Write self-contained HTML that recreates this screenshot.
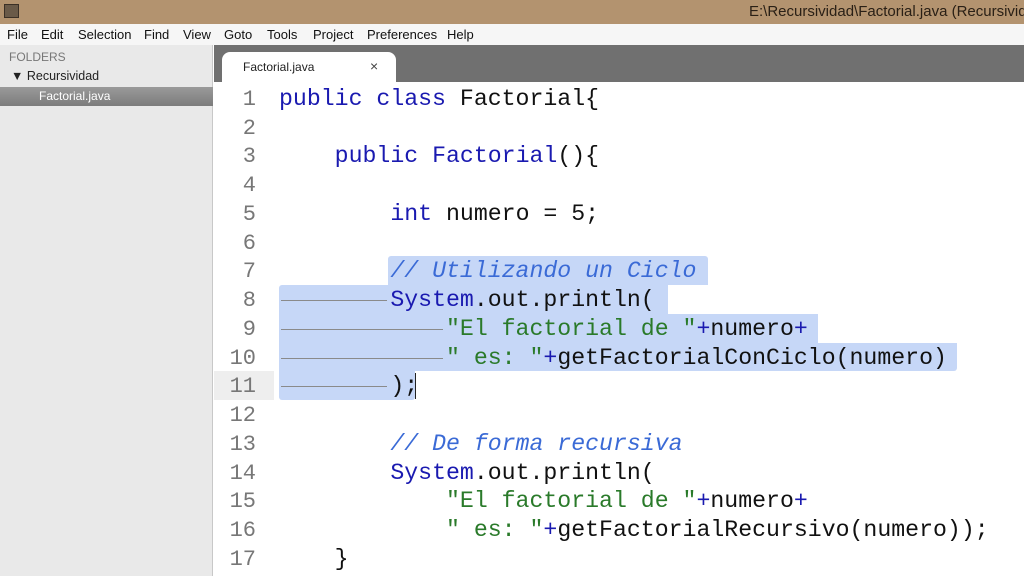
<!DOCTYPE html>
<html><head><meta charset="utf-8"><style>
*{margin:0;padding:0;box-sizing:border-box}
body{width:1024px;height:576px;overflow:hidden;position:relative;background:#fff;font-family:"Liberation Sans","DejaVu Sans",sans-serif}
#title{position:absolute;left:0;top:0;width:1024px;height:24px;background:#b3936f}
#title .ic{position:absolute;left:4px;top:4px;width:15px;height:14px;background:#6a5a48;border:1px solid #3b3026}
#title .t{position:absolute;left:749px;top:3px;font-size:15px;color:#2a2016;white-space:nowrap}
#menu{position:absolute;left:0;top:24px;width:1024px;height:21px;background:#f6f6f6;font-size:13px;color:#111}
#menu span{position:absolute;top:3px}
#side{position:absolute;left:0;top:45px;width:213px;height:531px;background:#e9e9e9;border-right:1px solid #c8c8c8}
#side .f{position:absolute;left:9px;top:5px;font-size:12px;color:#777}
#side .r{position:absolute;left:11px;top:24px;font-size:12.5px;color:#222}
#side .sel{position:absolute;left:0;top:42px;width:213px;height:19px;background:linear-gradient(#9a9a9a,#7c7c7c)}
#side .sel span{position:absolute;left:39px;top:2px;font-size:12px;color:#fff}
#tabs{position:absolute;left:214px;top:45px;width:810px;height:37px;background:#707070}
#tab{position:absolute;left:222px;top:52px;width:174px;height:31px;background:#fff;border-radius:8px 8px 0 0}
#tab .n{position:absolute;left:21px;top:8px;font-size:12px;color:#222}
#tab .x{position:absolute;left:148px;top:6px;font-size:14px;color:#444}
#ed{position:absolute;left:214px;top:82px;width:810px;height:494px;background:#fff}
.ln{position:absolute;left:214px;width:42px;text-align:right;font-family:"Liberation Mono","DejaVu Sans Mono",monospace;font-size:22px;color:#777;height:29px;line-height:29px}
.cl{position:absolute;left:279px;font-family:"Liberation Mono","DejaVu Sans Mono",monospace;font-size:23.2px;color:#111;white-space:pre;height:29px;line-height:29px}
.k{color:#1a1ab0}.s{color:#2a7a2a}.c{color:#3a6ad6;font-style:italic}.p{color:#1a1ab0}
.sl{position:absolute;background:#c6d7f7}
.g{position:absolute;height:1px;background:#8a8a8a}
#cur{position:absolute;left:214px;top:371px;width:60px;height:29px;background:#eeeeee}
</style></head><body>
<div id="title"><div class="ic"></div><div class="t">E:\Recursividad\Factorial.java (Recursividad</div></div>
<div id="menu"><span style="left:7px">File</span><span style="left:41px">Edit</span><span style="left:78px">Selection</span><span style="left:144px">Find</span><span style="left:183px">View</span><span style="left:224px">Goto</span><span style="left:267px">Tools</span><span style="left:313px">Project</span><span style="left:367px">Preferences</span><span style="left:447px">Help</span></div>
<div id="side"><div class="f">FOLDERS</div><div class="r">▼ Recursividad</div><div class="sel"><span>Factorial.java</span></div></div>
<div id="tabs"></div>
<div id="tab"><span class="n">Factorial.java</span><span class="x">×</span></div>
<div id="ed"></div>
<div id="cur"></div>
<div class="sl" style="left:388px;top:256px;width:320px;height:29px;border-radius:3px 3px 0 0"></div>
<div class="sl" style="left:279px;top:285px;width:389px;height:29px;border-radius:3px 0 0 0"></div>
<div class="sl" style="left:279px;top:314px;width:539px;height:29px"></div>
<div class="sl" style="left:279px;top:343px;width:678px;height:28px;border-radius:0 0 3px 0"></div>
<div class="sl" style="left:279px;top:371px;width:136px;height:29px;border-radius:0 0 3px 3px"></div>
<div class="g" style="left:281px;top:300px;width:106px"></div>
<div class="g" style="left:281px;top:329px;width:162px"></div>
<div class="g" style="left:281px;top:358px;width:162px"></div>
<div class="g" style="left:281px;top:386px;width:106px"></div>
<div style="position:absolute;left:415px;top:373px;width:1px;height:26px;background:#222"></div>

<div class="ln" style="top:85px">1</div><div class="ln" style="top:114px">2</div><div class="ln" style="top:142px">3</div><div class="ln" style="top:171px">4</div><div class="ln" style="top:200px">5</div><div class="ln" style="top:229px">6</div><div class="ln" style="top:257px">7</div><div class="ln" style="top:286px">8</div><div class="ln" style="top:315px">9</div><div class="ln" style="top:344px">10</div><div class="ln" style="top:372px">11</div><div class="ln" style="top:401px">12</div><div class="ln" style="top:430px">13</div><div class="ln" style="top:459px">14</div><div class="ln" style="top:487px">15</div><div class="ln" style="top:516px">16</div><div class="ln" style="top:545px">17</div>

<div class="cl" style="top:85px"><span class="k">public class</span> Factorial{</div>
<div class="cl" style="top:142px">    <span class="k">public</span> <span class="k">Factorial</span>(){</div>
<div class="cl" style="top:200px">        <span class="k">int</span> numero = 5;</div>
<div class="cl" style="top:257px">        <span class="c">// Utilizando un Ciclo</span></div>
<div class="cl" style="top:286px">        <span class="k">System</span>.out.println(</div>
<div class="cl" style="top:315px">            <span class="s">"El factorial de "</span><span class="p">+</span>numero<span class="p">+</span></div>
<div class="cl" style="top:344px">            <span class="s">" es: "</span><span class="p">+</span>getFactorialConCiclo(numero)</div>
<div class="cl" style="top:372px">        );</div>
<div class="cl" style="top:430px">        <span class="c">// De forma recursiva</span></div>
<div class="cl" style="top:459px">        <span class="k">System</span>.out.println(</div>
<div class="cl" style="top:487px">            <span class="s">"El factorial de "</span><span class="p">+</span>numero<span class="p">+</span></div>
<div class="cl" style="top:516px">            <span class="s">" es: "</span><span class="p">+</span>getFactorialRecursivo(numero));</div>
<div class="cl" style="top:545px">    }</div>
</body></html>
